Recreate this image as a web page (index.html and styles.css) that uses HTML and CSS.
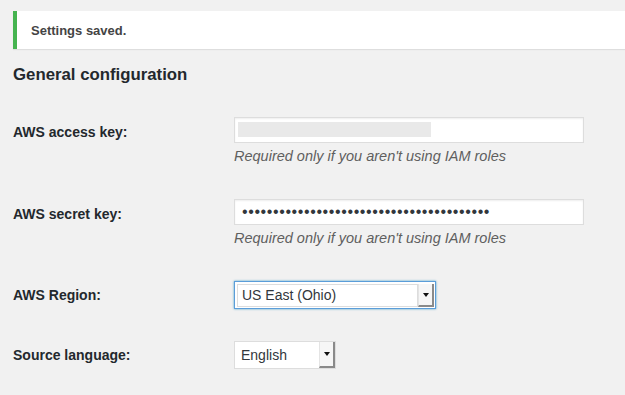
FILE: index.html
```html
<html>
  <head>
    <title>Settings</title>
    <link rel="stylesheet" href="styles.css">
  </head>
  <body>
    <div class="notice">
      <p>Settings saved.</p>
    </div>
    <h2 class="section-title">General configuration</h2>
    <div class="form">
      <div class="row">
        <label class="row-label">AWS access key:</label>
        <div class="field">
          <div class="text-input redacted"></div>
          <p class="desc">Required only if you aren't using IAM roles</p>
        </div>
      </div>
      <div class="row">
        <label class="row-label">AWS secret key:</label>
        <div class="field">
          <div class="text-input password">&bull;&bull;&bull;&bull;&bull;&bull;&bull;&bull;&bull;&bull;&bull;&bull;&bull;&bull;&bull;&bull;&bull;&bull;&bull;&bull;&bull;&bull;&bull;&bull;&bull;&bull;&bull;&bull;&bull;&bull;&bull;&bull;&bull;&bull;&bull;&bull;&bull;&bull;&bull;&bull;</div>
          <p class="desc">Required only if you aren't using IAM roles</p>
        </div>
      </div>
      <div class="row row-select">
        <label class="row-label">AWS Region:</label>
        <div class="field">
          <div class="select select-focus">
            <span class="select-value">US East (Ohio)</span>
            <span class="select-btn"><i class="caret"></i></span>
          </div>
        </div>
      </div>
      <div class="row row-select">
        <label class="row-label">Source language:</label>
        <div class="field">
          <div class="select select-small">
            <span class="select-value">English</span>
            <span class="select-btn"><i class="caret"></i></span>
          </div>
        </div>
      </div>
    </div>
  </body>
</html>
```

FILE: styles.css
```css
body {
  margin: 0;
  background-color: #f1f1f1;
  color: #23282d;
  font-family: "Liberation Sans", Arial, sans-serif;
  overflow: hidden;
}

.notice {
  margin: 11px 0 0 13px;
  height: 38px;
  display: flex;
  align-items: center;
  background-color: #fff;
  border-left: 4px solid #46b450;
  box-shadow: 0 1px 1px rgba(0, 0, 0, .08);
  padding-left: 14px;
}
.notice p {
  margin: 0;
  font-size: 13px;
  font-weight: bold;
  color: #444;
}

.section-title {
  margin: 14px 0 14px 13px;
  font-size: 16.8px;
  line-height: 24px;
  font-weight: bold;
}

.row {display: flex; align-items: flex-start; padding: 16px 0 17px 13px;}
.row-select {padding-bottom: 16px;}
.row-label {
  width: 221px;
  flex: none;
  font-size: 14px;
  font-weight: bold;
  line-height: 30px;
}
.row-select .row-label {line-height: 28px;}

.text-input {
  box-sizing: border-box;
  width: 350px;
  height: 26px;
  background-color: #fff;
  border: 1px solid #ddd;
  box-shadow: inset 0 1px 2px rgba(0, 0, 0, .07);
}
.redacted {
  background: linear-gradient(#e9e9e9, #e9e9e9) no-repeat 3px 4px / 193px 15px, #fff;
}
.password {
  padding-left: 7px;
  font-size: 16px;
  line-height: 23px;
  letter-spacing: 0.6px;
  color: #32373c;
  white-space: nowrap;
  overflow: hidden;
}

.desc {
  margin: 3px 0 0 0;
  font-size: 14.5px;
  line-height: 20px;
  font-style: italic;
  color: #5f5f5f;
}

.select {
  box-sizing: border-box;
  height: 28px;
  display: flex;
  background-color: #fff;
  border: 1px solid #ddd;
  font-size: 14px;
  color: #32373c;
}
.select-value {flex: 1; padding-left: 6px; line-height: 26px;}
.select-focus {
  width: 202px;
  padding: 2px 1px 1px 2px;
  border-color: #5b9dd9;
  box-shadow: 0 0 2px rgba(30, 140, 190, .8);
}
.select-focus .select-value {
  border: 1px solid #ddd;
  padding-left: 4px;
  line-height: 20px;
}
.select-small {width: 102px;}

.select-btn {
  box-sizing: border-box;
  width: 16px;
  display: flex;
  align-items: center;
  justify-content: center;
  background-color: #f6f6f6;
  border-left: 1px solid #e4e4e4;
  border-right: 2px solid #8a8a8a;
  border-bottom: 2px solid #8a8a8a;
}
.caret {
  width: 0;
  height: 0;
  border-left: 3px solid transparent;
  border-right: 3px solid transparent;
  border-top: 4px solid #111;
}
```
